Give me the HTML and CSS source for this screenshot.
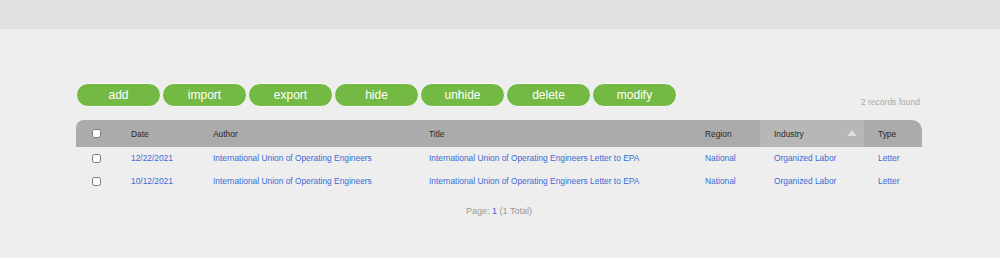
FILE: index.html
```html
<!DOCTYPE html>
<html lang="en">
<head>
    <meta charset="UTF-8">
    <title>Records</title>
    <link rel="stylesheet" href="styles.css">
</head>
<body>
    <div class="top-bar"></div>
    <div class="content">
        <div class="toolbar">
            <div class="buttons">
                <button>add</button>
                <button>import</button>
                <button>export</button>
                <button>hide</button>
                <button>unhide</button>
                <button>delete</button>
                <button>modify</button>
            </div>
            <div class="count">2 records found</div>
        </div>
        <table class="records">
            <colgroup>
                <col style="width: 41px">
                <col style="width: 82px">
                <col style="width: 216px">
                <col style="width: 276px">
                <col style="width: 69px">
                <col style="width: 104px">
                <col>
            </colgroup>
            <thead>
                <tr>
                    <th class="check"><input type="checkbox"></th>
                    <th>Date</th>
                    <th>Author</th>
                    <th>Title</th>
                    <th>Region</th>
                    <th class="sorted">Industry <span class="arrow"></span></th>
                    <th>Type</th>
                </tr>
            </thead>
            <tbody>
                <tr>
                    <td class="check"><input type="checkbox"></td>
                    <td><a href="#">12/22/2021</a></td>
                    <td><a href="#">International Union of Operating Engineers</a></td>
                    <td><a href="#">International Union of Operating Engineers Letter to EPA</a></td>
                    <td><a href="#">National</a></td>
                    <td><a href="#">Organized Labor</a></td>
                    <td><a href="#">Letter</a></td>
                </tr>
                <tr>
                    <td class="check"><input type="checkbox"></td>
                    <td><a href="#">10/12/2021</a></td>
                    <td><a href="#">International Union of Operating Engineers</a></td>
                    <td><a href="#">International Union of Operating Engineers Letter to EPA</a></td>
                    <td><a href="#">National</a></td>
                    <td><a href="#">Organized Labor</a></td>
                    <td><a href="#">Letter</a></td>
                </tr>
            </tbody>
        </table>
        <div class="pager">Page: <a href="#">1</a> (1 Total)</div>
    </div>
</body>
</html>
```

FILE: styles.css
```css
:root {
    --green: #74b944;
    --link: #3a6bd4;
    --header: #ababab;
}
body {
    margin: 0;
    font-family: 'Liberation Sans', Arial, sans-serif;
    background-color: #eeeeee;
    color: #333;
}
.top-bar {
    height: 28px;
    background-color: #e1e1e1;
    border-bottom: 1px solid #dcdcdc;
}
.content {
    width: 846px;
    margin: 0 0 0 76px;
    padding-top: 54px;
}
.toolbar {
    display: flex;
    justify-content: space-between;
    align-items: flex-end;
}
.buttons {
    display: flex;
    gap: 1px;
}
.buttons button {
    width: 85px;
    height: 24px;
    background-color: var(--green);
    color: #fff;
    border: 1px solid #fafafa;
    border-radius: 12px;
    font-family: inherit;
    font-size: 12px;
    padding: 0;
    cursor: pointer;
}
.count {
    font-size: 8.5px;
    color: #aaa;
    margin: 0 2px 0 0;
}
.records {
    width: 100%;
    margin-top: 13px;
    border-collapse: collapse;
    table-layout: fixed;
    font-size: 8.4px;
}
.records thead tr {
    background-color: var(--header);
}
.records th {
    height: 26px;
    padding: 0 0 0 14px;
    text-align: left;
    font-weight: normal;
    color: #2a2a2a;
}
.records th:first-child {
    border-top-left-radius: 8px;
}
.records th:last-child {
    border-top-right-radius: 10px;
}
.records th.sorted {
    background-color: #b7b7b7;
    position: relative;
}
.arrow {
    position: absolute;
    right: 7px;
    top: 10px;
    border-left: 5px solid transparent;
    border-right: 5px solid transparent;
    border-bottom: 6px solid #dedede;
}
.records td {
    height: 22px;
    padding: 0 0 1px 14px;
}
.records .check {
    padding: 0 0 1px 0;
    text-align: center;
}
.records input[type="checkbox"] {
    width: 9px;
    height: 9px;
    margin: 0;
    vertical-align: middle;
}
.records a {
    color: var(--link);
    text-decoration: none;
}
.pager {
    text-align: center;
    font-size: 9px;
    color: #999;
    margin-top: 13px;
}
.pager a {
    color: var(--link);
    text-decoration: none;
}
```
